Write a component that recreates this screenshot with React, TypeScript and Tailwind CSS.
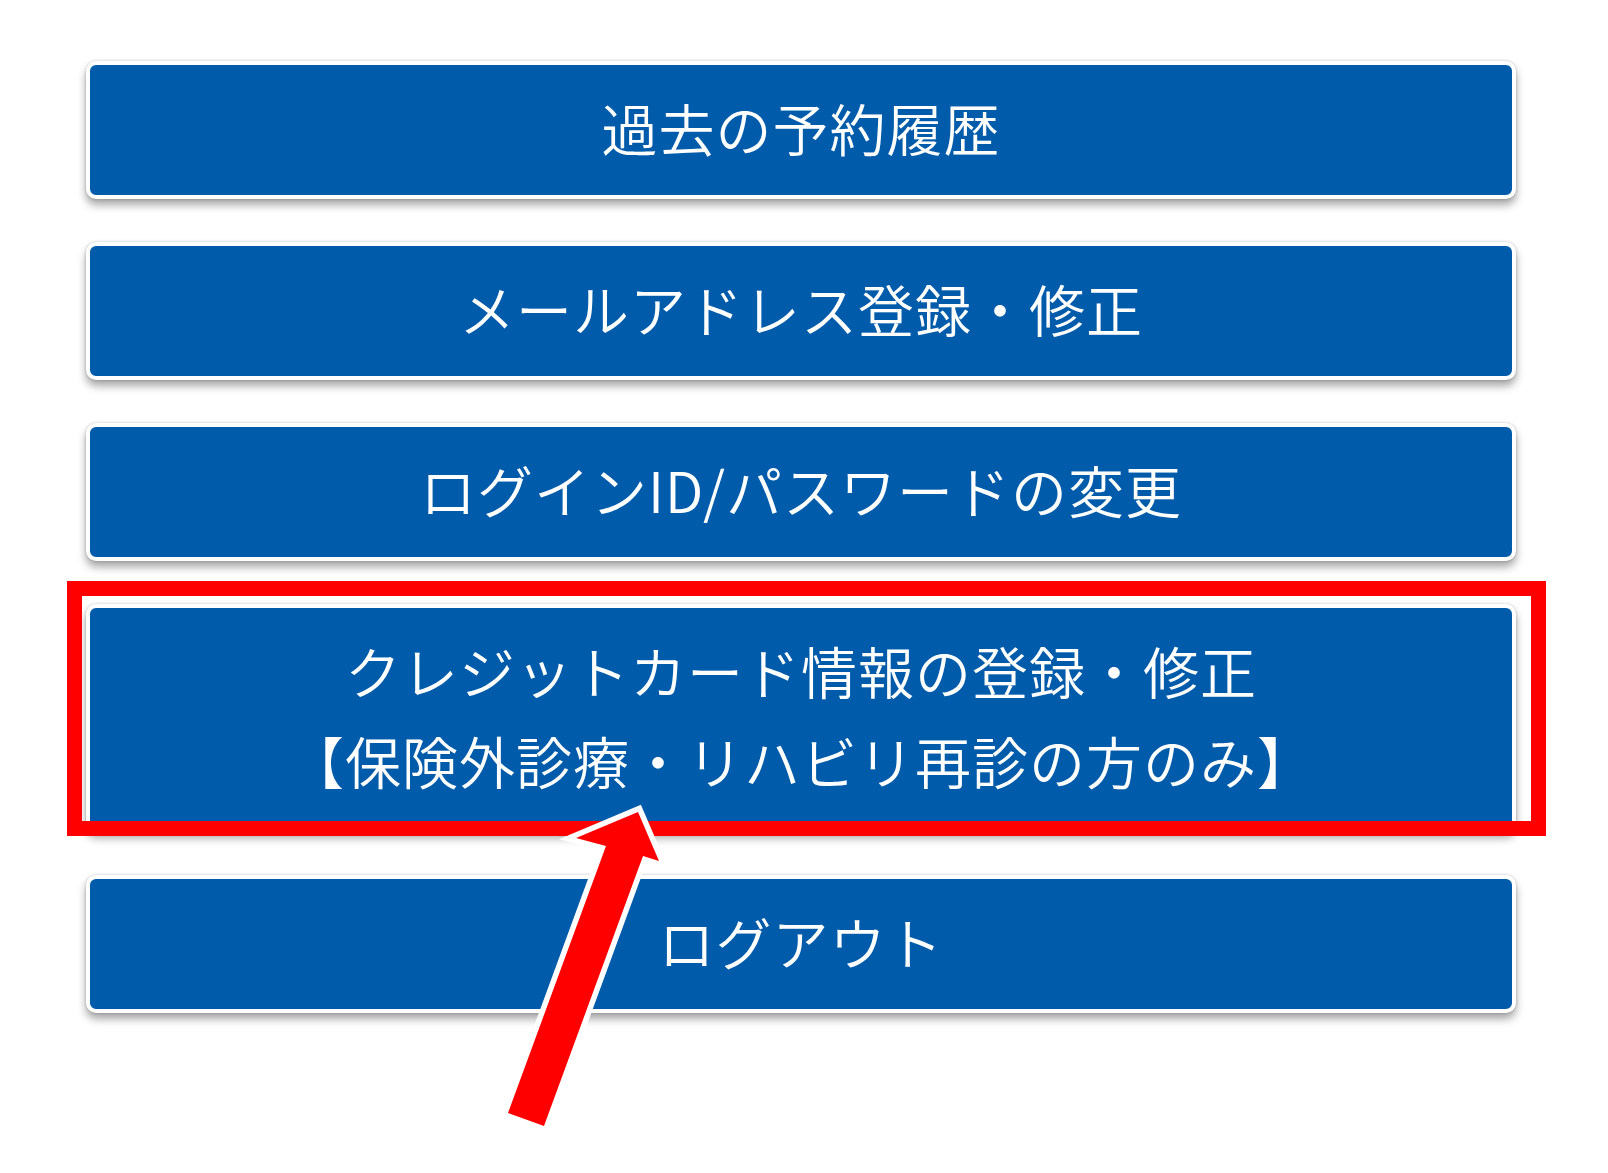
const menuItems: { label: string[]; tall?: boolean }[] = [
  { label: ["過去の予約履歴"] },
  { label: ["メールアドレス登録・修正"] },
  { label: ["ログインID/パスワードの変更"] },
  { label: ["クレジットカード情報の登録・修正", "【保険外診療・リハビリ再診の方のみ】"], tall: true },
  { label: ["ログアウト"] },
];

function MenuButton({ label, tall }: { label: string[]; tall?: boolean }) {
  return (
    <button
      type="button"
      className={`flex w-full flex-col items-center justify-center rounded-[10px] border-4 border-white bg-[#005baa] pb-[6px] text-white shadow-[0_6px_8px_rgba(0,0,0,0.35),0_0_3px_rgba(0,0,0,0.2)] ${
        tall ? "h-[228px]" : "h-[138px]"
      }`}
    >
      {label.map((line) => (
        <span key={line} className="block text-[56px] font-[350] leading-[90px] tracking-[1px]">
          {line}
        </span>
      ))}
    </button>
  );
}

export default function App() {
  return (
    <div
      className="relative h-[1173px] w-[1608px] overflow-hidden bg-white"
      style={{ fontFamily: '"Noto Sans CJK JP", "Noto Sans", sans-serif' }}
    >
      <div className="flex w-[1516px] flex-col gap-[43px] pl-[86px] pt-[61px]">
        {menuItems.map((item) => (
          <MenuButton key={item.label[0]} label={item.label} tall={item.tall} />
        ))}
      </div>

      {/* annotation: highlight box */}
      <div className="pointer-events-none absolute left-[67px] top-[581px] h-[255px] w-[1479px] border-[15px] border-[#ff0000]" />

      {/* annotation: arrow */}
      <svg
        className="pointer-events-none absolute left-0 top-0"
        width="1608"
        height="1173"
        viewBox="0 0 1608 1173"
      >
        <polygon
          points="638,812 659,861 643,856 544,1126 508,1113 606,846 576,838"
          fill="#ff0000"
          stroke="#ffffff"
          strokeWidth="11"
          strokeLinejoin="miter"
          paintOrder="stroke"
        />
      </svg>
    </div>
  );
}
